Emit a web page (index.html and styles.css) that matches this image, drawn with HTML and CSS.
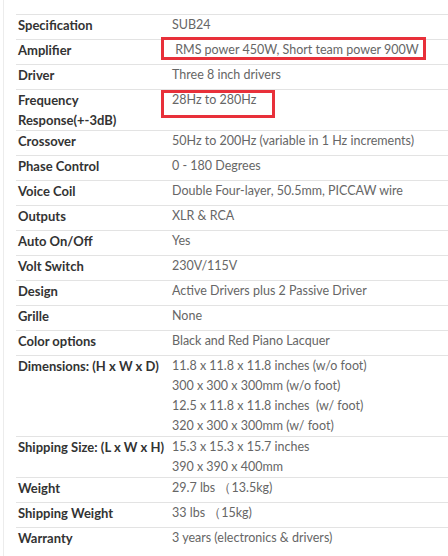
FILE: index.html
```html
<!DOCTYPE html>
<html>
<head>
<meta charset="utf-8">
<link rel="stylesheet" href="styles.css">
</head>
<body>
<div class="page">
  <div class="wrap">
    <table class="specs">
      <tr><th>Specification</th><td>SUB24</td></tr>
      <tr><th>Amplifier</th><td>&nbsp;RMS power 450W, Short team power 900W</td></tr>
      <tr><th>Driver</th><td>Three 8 inch drivers</td></tr>
      <tr><th>Frequency Response(+-3dB)</th><td>28Hz to 280Hz</td></tr>
      <tr><th>Crossover</th><td>50Hz to 200Hz (variable in 1 Hz increments)</td></tr>
      <tr><th>Phase Control</th><td>0 - 180 Degrees</td></tr>
      <tr><th>Voice Coil</th><td>Double Four-layer, 50.5mm, PICCAW wire</td></tr>
      <tr><th>Outputs</th><td>XLR &amp; RCA</td></tr>
      <tr><th>Auto On/Off</th><td>Yes</td></tr>
      <tr><th>Volt Switch</th><td>230V/115V</td></tr>
      <tr><th>Design</th><td>Active Drivers plus 2 Passive Driver</td></tr>
      <tr><th>Grille</th><td>None</td></tr>
      <tr><th>Color options</th><td>Black and Red Piano Lacquer</td></tr>
      <tr><th>Dimensions: (H x W x D)</th><td>11.8 x 11.8 x 11.8 inches (w/o foot)<br>300 x 300 x 300mm (w/o foot)<br>12.5 x 11.8 x 11.8 inches&nbsp; (w/ foot)<br>320 x 300 x 300mm (w/ foot)</td></tr>
      <tr><th>Shipping Size: (L x W x H)</th><td>15.3 x 15.3 x 15.7 inches<br>390 x 390 x 400mm</td></tr>
      <tr><th>Weight</th><td>29.7 lbs （13.5kg)</td></tr>
      <tr><th>Shipping Weight</th><td>33 lbs （15kg)</td></tr>
      <tr><th>Warranty</th><td>3 years (electronics &amp; drivers)</td></tr>
    </table>
    <div class="mark mark-amp"></div>
    <div class="mark mark-freq"></div>
  </div>
</div>
</body>
</html>
```

FILE: styles.css
```css
html, body {
  margin: 0;
  padding: 0;
  background: #fff;
}
.page {
  margin-left: 3px;
  border-left: 1px solid #ececec;
  min-height: 556px;
  padding: 14px 0 0 12px;
  box-sizing: border-box;
}
.wrap {
  position: relative;
}
.specs {
  width: 440px;
  border-collapse: collapse;
  font-family: "Lato", "Open Sans", sans-serif;
  font-size: 13px;
  line-height: 20px;
}
.specs tr {
  border-top: 1px solid #e3e3e3;
}
.specs th, .specs td {
  height: 24px;
  padding: 0;
  vertical-align: top;
  text-align: left;
}
.specs th {
  width: 154px;
  padding-left: 2px;
  font-weight: 700;
  color: #333;
}
.specs td {
  color: #666;
  font-size: 12.5px;
}
.mark {
  position: absolute;
  border: 3px solid #e8303a;
  box-sizing: border-box;
}
.mark-amp {
  left: 145px;
  top: 23px;
  width: 265px;
  height: 23px;
}
.mark-freq {
  left: 145px;
  top: 76px;
  width: 114px;
  height: 28px;
}
```
